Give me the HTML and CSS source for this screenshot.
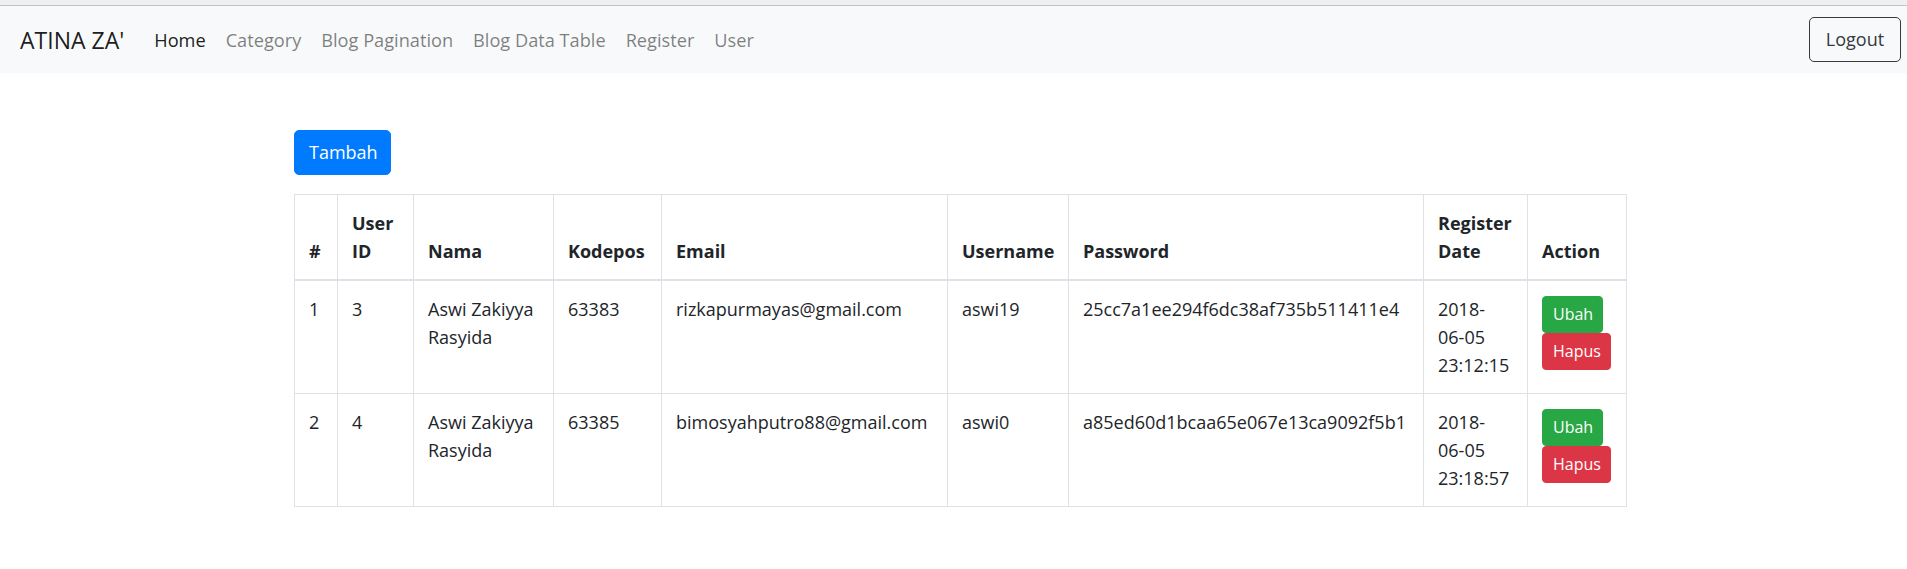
FILE: index.html
```html
<!DOCTYPE html>
<html lang="id">
<head>
<meta charset="utf-8">
<title>User</title>
<link rel="stylesheet" href="styles.css">
</head>
<body>
<div class="chrome"></div>
<nav class="navbar">
  <a class="brand" href="#">ATINA ZA'</a>
  <ul class="nav">
    <li><a class="nav-link active" href="#">Home</a></li>
    <li><a class="nav-link" href="#">Category</a></li>
    <li><a class="nav-link" href="#">Blog Pagination</a></li>
    <li><a class="nav-link" href="#">Blog Data Table</a></li>
    <li><a class="nav-link" href="#">Register</a></li>
    <li><a class="nav-link" href="#">User</a></li>
  </ul>
  <button class="btn btn-outline">Logout</button>
</nav>
<main class="content">
  <button class="btn btn-primary">Tambah</button>
  <table class="table">
    <colgroup>
      <col class="c-no"><col class="c-id"><col class="c-nama"><col class="c-kode"><col class="c-email"><col class="c-user"><col class="c-pass"><col class="c-date"><col class="c-act">
    </colgroup>
    <thead>
      <tr>
        <th>#</th><th>User ID</th><th>Nama</th><th>Kodepos</th><th>Email</th><th>Username</th><th>Password</th><th>Register Date</th><th>Action</th>
      </tr>
    </thead>
    <tbody>
      <tr>
        <td>1</td><td>3</td><td>Aswi Zakiyya Rasyida</td><td>63383</td><td>rizkapurmayas@gmail.com</td><td>aswi19</td><td>25cc7a1ee294f6dc38af735b511411e4</td><td>2018-<span class="nobr">06-05</span> 23:12:15</td>
        <td><div class="actions"><button class="btn btn-sm btn-success">Ubah</button><button class="btn btn-sm btn-danger">Hapus</button></div></td>
      </tr>
      <tr>
        <td>2</td><td>4</td><td>Aswi Zakiyya Rasyida</td><td>63385</td><td>bimosyahputro88@gmail.com</td><td>aswi0</td><td>a85ed60d1bcaa65e067e13ca9092f5b1</td><td>2018-<span class="nobr">06-05</span> 23:18:57</td>
        <td><div class="actions"><button class="btn btn-sm btn-success">Ubah</button><button class="btn btn-sm btn-danger">Hapus</button></div></td>
      </tr>
    </tbody>
  </table>
</main>
</body>
</html>
```
FILE: styles.css
```css
* { box-sizing: border-box; }
body {
  margin: 0;
  font-family: "Open Sans", "Noto Sans", "Liberation Sans", sans-serif;
  font-size: 18px;
  line-height: 28px;
  color: #212529;
  background: #fff;
}
.chrome {
  height: 6px;
  background: #f0f0f0;
  border-bottom: 1px solid #c4c4c4;
}
.navbar {
  display: flex;
  align-items: center;
  height: 67px;
  padding: 0 6px 0 20px;
  background: #f8f9fa;
}
.brand {
  font-size: 23px;
  color: rgba(0,0,0,.9);
  text-decoration: none;
  margin-right: 20px;
  white-space: nowrap;
}
.nav {
  display: flex;
  list-style: none;
  margin: 0;
  padding: 0;
  flex: 1;
}
.nav-link {
  display: block;
  padding: 9px 10px;
  color: rgba(0,0,0,.5);
  text-decoration: none;
  font-size: 18.2px;
}
.nav-link.active { color: rgba(0,0,0,.9); }
.btn {
  font-family: inherit;
  display: inline-block;
  border: 1px solid transparent;
  border-radius: 5px;
  padding: 7px 14px;
  font-size: 18px;
  line-height: 29px;
  cursor: pointer;
}
.btn-outline {
  color: #343a40;
  border-color: #343a40;
  background: transparent;
  width: 92px;
  height: 45px;
}
.btn-primary {
  background: #007bff;
  border-color: #007bff;
  color: #fff;
  width: 97px;
  height: 45px;
}
.btn-sm {
  font-size: 16px;
  line-height: 25px;
  padding: 5px 10px;
  border-radius: 4px;
  height: 37px;
}
.btn-success { background: #28a745; border-color: #28a745; color: #fff; }
.btn-danger { background: #dc3545; border-color: #dc3545; color: #fff; }
.content {
  width: 1332px;
  margin: 57px 0 0 294px;
}
.content > .btn-primary { margin-bottom: 19px; }
.table {
  width: 1332px;
  border-collapse: collapse;
  table-layout: fixed;
}
.table th, .table td {
  border: 1px solid #dee2e6;
  padding: 14px 14px;
  text-align: left;
}
.table th {
  vertical-align: bottom;
  font-weight: 700;
  border-bottom: 2px solid #dee2e6;
  padding-bottom: 14px;
}
.table td { vertical-align: top; }
.nobr { white-space: nowrap; }
.c-no { width: 43px; }
.c-id { width: 76px; }
.c-nama { width: 140px; }
.c-kode { width: 108px; }
.c-email { width: 286px; }
.c-user { width: 121px; }
.c-pass { width: 355px; }
.c-date { width: 104px; }
.c-act { width: 99px; }
.actions {
  display: flex;
  flex-direction: column;
  align-items: flex-start;
  margin-top: 1px;
}
.actions .btn-success { width: 61px; }
.actions .btn-danger { width: 69px; }
```
